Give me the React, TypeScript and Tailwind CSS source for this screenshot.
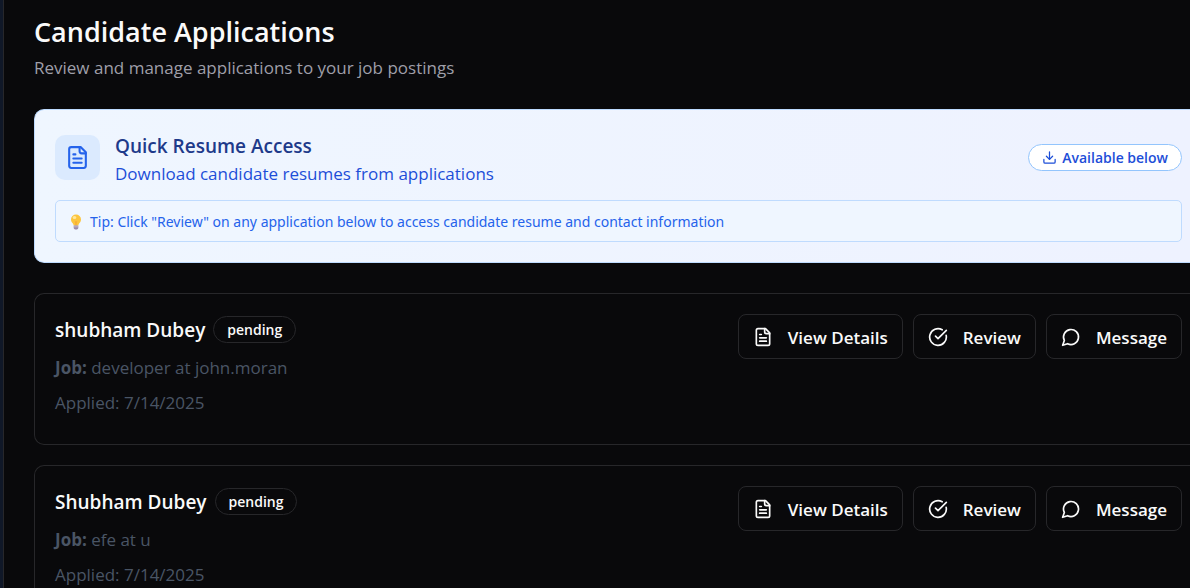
import React from "react";

type IconProps = { className?: string };

function Icon({ className, children }: IconProps & { children: React.ReactNode }) {
  return (
    <svg
      className={className}
      viewBox="0 0 24 24"
      fill="none"
      stroke="currentColor"
      strokeWidth="2"
      strokeLinecap="round"
      strokeLinejoin="round"
      aria-hidden="true"
    >
      {children}
    </svg>
  );
}

function FileTextIcon({ className }: IconProps) {
  return (
    <Icon className={className}>
      <path d="M15 2H6a2 2 0 0 0-2 2v16a2 2 0 0 0 2 2h12a2 2 0 0 0 2-2V7Z" />
      <path d="M14 2v4a2 2 0 0 0 2 2h4" />
      <path d="M10 9H8" />
      <path d="M16 13H8" />
      <path d="M16 17H8" />
    </Icon>
  );
}

function CheckIcon({ className }: IconProps) {
  return (
    <Icon className={className}>
      <path d="M21.801 10A10 10 0 1 1 17 3.335" />
      <path d="m9 11 3 3L22 4" />
    </Icon>
  );
}

function MessageIcon({ className }: IconProps) {
  return (
    <Icon className={className}>
      <path d="M7.9 20A9 9 0 1 0 4 16.1L2 22Z" />
    </Icon>
  );
}

function DownloadIcon({ className }: IconProps) {
  return (
    <Icon className={className}>
      <path d="M21 15v4a2 2 0 0 1-2 2H5a2 2 0 0 1-2-2v-4" />
      <path d="m7 10 5 5 5-5" />
      <path d="M12 15V3" />
    </Icon>
  );
}

function BulbIcon({ className }: IconProps) {
  return (
    <svg className={className} viewBox="0 0 12 16" aria-hidden="true">
      <path
        d="M6 .5a5 5 0 0 0-5 5c0 2 1.1 3 1.9 4.1.5.7.6 1.4.8 1.9h4.6c.2-.5.3-1.2.8-1.9C9.9 8.5 11 7.5 11 5.5a5 5 0 0 0-5-5Z"
        fill="#fcc53f"
      />
      <path d="M4.8 7 5.5 11.5h1l.7-4.5-1.2.6Z" fill="#f8ae35" />
      <ellipse cx="4.5" cy="3.5" rx="1.8" ry="1.5" fill="#ffe79a" />
      <path d="M3.7 11.5h4.6v2.2c0 1-.9 1.8-2.3 1.8s-2.3-.8-2.3-1.8Z" fill="#9b8aa8" />
      <path d="M3.7 12.8h4.6" stroke="#d3c8dc" strokeWidth=".7" />
    </svg>
  );
}

function ActionButton({ icon, label }: { icon: React.ReactNode; label: string }) {
  return (
    <button
      type="button"
      className="flex h-[45px] items-center gap-[15px] rounded-lg border border-zinc-800 px-[14px] text-[17px] font-semibold text-zinc-50 hover:bg-zinc-800"
    >
      {icon}
      <span className="pt-0.5">{label}</span>
    </button>
  );
}

type Application = { name: string; status: string; job: string; applied: string };

const applications: Application[] = [
  { name: "shubham Dubey", status: "pending", job: "developer at john.moran", applied: "7/14/2025" },
  { name: "Shubham Dubey", status: "pending", job: "efe at u", applied: "7/14/2025" },
];

function ApplicationCard({ name, status, job, applied }: Application) {
  return (
    <li className="flex items-start justify-between rounded-l-[10px] border border-r-0 border-zinc-800 pt-5 pr-2 pb-[29px] pl-5">
      <div>
        <div className="flex items-center gap-2">
          <h2 className="pt-[3px] text-[19px] leading-[27px] font-semibold text-zinc-50">{name}</h2>
          <span className="rounded-full border border-zinc-800 px-[13px] pt-px text-[14px] leading-6 font-semibold text-zinc-50">
            {status}
          </span>
        </div>
        <p className="mt-[11px] text-[17px] leading-[25px] text-gray-600">
          <strong>Job:</strong> {job}
        </p>
        <p className="mt-[10px] text-[17px] leading-[25px] text-gray-600">Applied: {applied}</p>
      </div>
      <div className="flex gap-[10px]">
        <ActionButton icon={<FileTextIcon className="size-5" />} label="View Details" />
        <ActionButton icon={<CheckIcon className="size-5" />} label="Review" />
        <ActionButton icon={<MessageIcon className="size-5" />} label="Message" />
      </div>
    </li>
  );
}

export default function App() {
  return (
    <div className="flex h-screen overflow-hidden bg-[#09090b] font-['Open_Sans','Noto_Sans',sans-serif]">
      <div className="w-1 shrink-0 border-r border-zinc-800 bg-gray-900" />
      <main className="min-w-0 flex-1 pt-[13px] pl-[30px]">
        <h1 className="text-[27px] leading-[38px] font-semibold text-zinc-50">Candidate Applications</h1>
        <p className="mt-1 text-[17px] leading-[25px] text-zinc-400">
          Review and manage applications to your job postings
        </p>

        <section className="mt-[29px] rounded-l-[10px] border border-r-0 border-blue-200 bg-linear-to-r from-[#eff6ff] to-[#eef2ff] pt-[19px] pr-2 pb-5 pl-5">
          <div className="flex items-center justify-between">
            <div className="flex items-center gap-[15px]">
              <div className="flex size-[45px] items-center justify-center rounded-[10px] bg-[#dbeafe] text-[#2563eb]">
                <FileTextIcon className="size-[25px]" />
              </div>
              <div className="pt-0.5">
                <h2 className="text-[19px] leading-[30px] font-semibold text-[#1e3a8a]">Quick Resume Access</h2>
                <p className="text-[17px] leading-[25px] text-[#1d4ed8]">
                  Download candidate resumes from applications
                </p>
              </div>
            </div>
            <span className="flex items-center gap-[5px] rounded-full border border-[#93c5fd] bg-white px-[13px] text-[14px] leading-[25px] font-semibold text-[#1d4ed8]">
              <DownloadIcon className="size-[15px]" />
              Available below
            </span>
          </div>
          <p className="mt-[14px] flex items-center gap-2 rounded-[5px] border border-[#bfdbfe] bg-[#eff6ff] px-[14px] pt-[11px] pb-[9px] font-['Noto_Sans',sans-serif] text-[14px] leading-5 text-[#2563eb]">
            <BulbIcon className="h-4 w-3" />
            <span>
              Tip: Click "Review" on any application below to access candidate resume and contact information
            </span>
          </p>
        </section>

        <ul className="mt-[30px] flex flex-col gap-5">
          {applications.map((application) => (
            <ApplicationCard key={application.name} {...application} />
          ))}
        </ul>
      </main>
    </div>
  );
}
